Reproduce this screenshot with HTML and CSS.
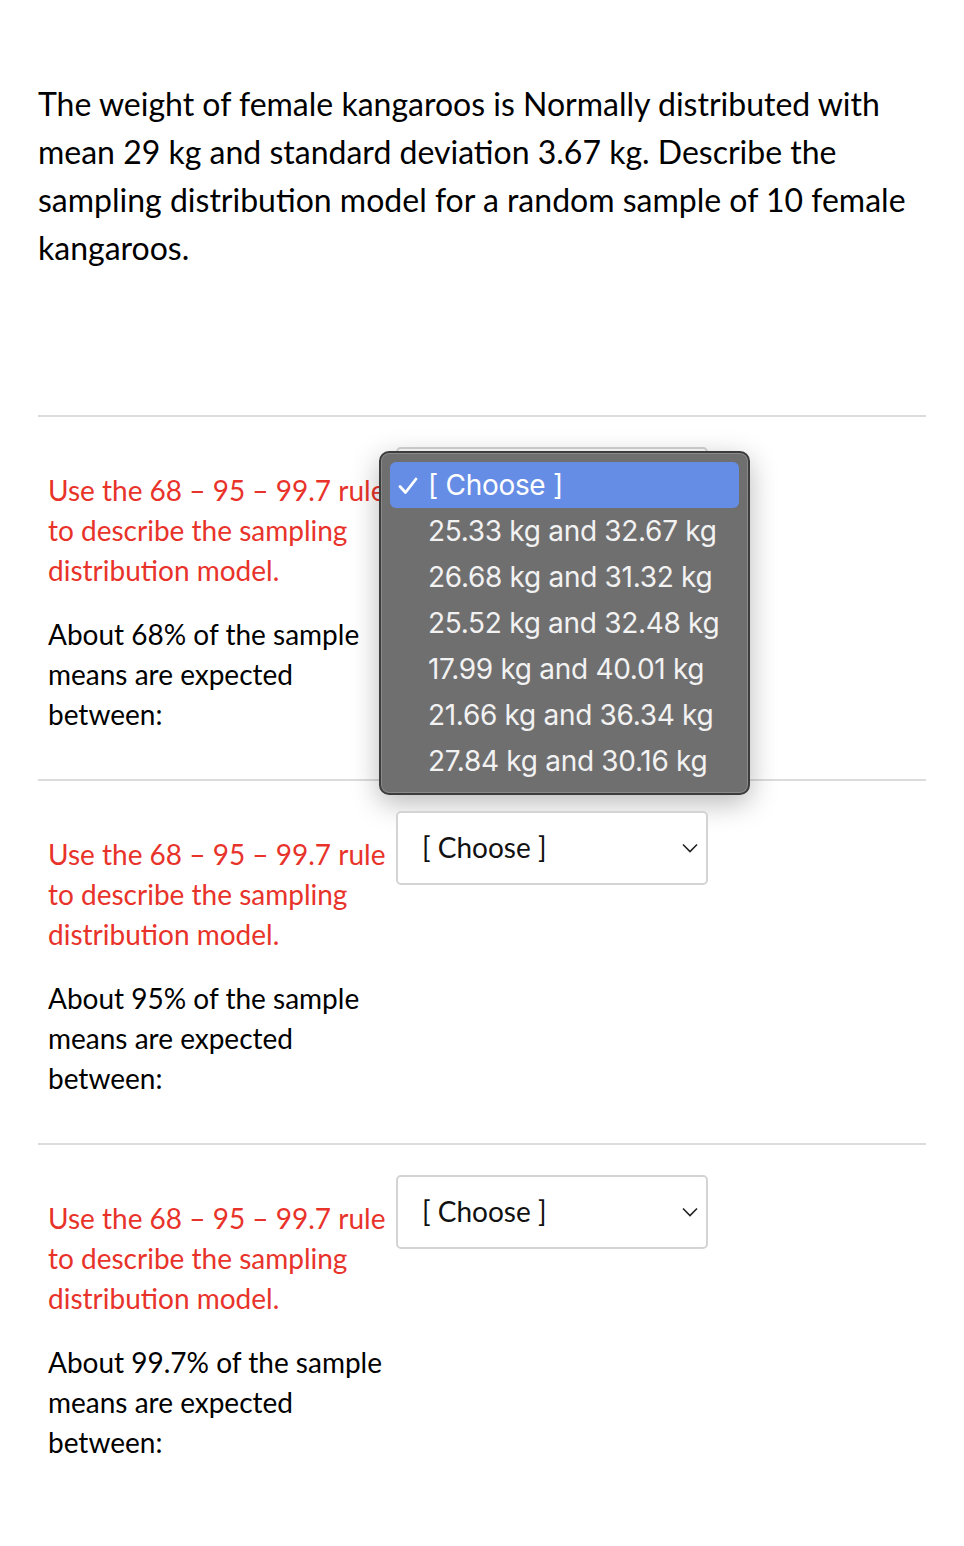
FILE: index.html
```html
<!DOCTYPE html>
<html>
<head>
<meta charset="utf-8">
<link rel="stylesheet" href="styles.css">
</head>
<body>
<div class="page">
  <p class="question">The weight of female kangaroos is Normally distributed with mean 29 kg and standard deviation 3.67 kg. Describe the sampling distribution model for a random sample of 10 female kangaroos.</p>
  <div class="rows">
    <div class="row">
      <div class="label">
        <p class="hint">Use the 68 – 95 – 99.7 rule to describe the sampling distribution model.</p>
        <p class="text">About 68% of the sample means are expected between:</p>
      </div>
      <div class="control">
        <div class="select open"><span>[ Choose ]</span><svg class="chev" width="16" height="10" viewBox="0 0 16 10"><path d="M1 1.5 L8 8.5 L15 1.5" fill="none" stroke="#222" stroke-width="1.6"/></svg></div>
        <div class="menu">
          <div class="opt active"><svg class="check" width="20" height="18" viewBox="0 0 20 18"><path d="M2 9.5 L7.5 15.5 L18 2" fill="none" stroke="#fff" stroke-width="2.8" stroke-linecap="round" stroke-linejoin="round"/></svg>[ Choose ]</div>
          <div class="opt">25.33 kg and 32.67 kg</div>
          <div class="opt">26.68 kg and 31.32 kg</div>
          <div class="opt">25.52 kg and 32.48 kg</div>
          <div class="opt">17.99 kg and 40.01 kg</div>
          <div class="opt">21.66 kg and 36.34 kg</div>
          <div class="opt">27.84 kg and 30.16 kg</div>
        </div>
      </div>
    </div>
    <div class="row">
      <div class="label">
        <p class="hint">Use the 68 – 95 – 99.7 rule to describe the sampling distribution model.</p>
        <p class="text">About 95% of the sample means are expected between:</p>
      </div>
      <div class="control">
        <div class="select"><span>[ Choose ]</span><svg class="chev" width="16" height="10" viewBox="0 0 16 10"><path d="M1 1.5 L8 8.5 L15 1.5" fill="none" stroke="#222" stroke-width="1.6"/></svg></div>
      </div>
    </div>
    <div class="row last">
      <div class="label">
        <p class="hint">Use the 68 – 95 – 99.7 rule to describe the sampling distribution model.</p>
        <p class="text">About 99.7% of the sample means are expected between:</p>
      </div>
      <div class="control">
        <div class="select"><span>[ Choose ]</span><svg class="chev" width="16" height="10" viewBox="0 0 16 10"><path d="M1 1.5 L8 8.5 L15 1.5" fill="none" stroke="#222" stroke-width="1.6"/></svg></div>
      </div>
    </div>
  </div>
</div>
</body>
</html>
```
FILE: styles.css
```css
html, body {
  margin: 0;
  padding: 0;
  background: #fff;
}
body {
  font-family: Lato, "Liberation Sans", sans-serif;
  color: #000;
}
.page {
  padding: 80px 38px 0 38px;
}
.question {
  margin: 0;
  font-size: 32px;
  line-height: 48px;
}
.rows {
  margin-top: 143px;
  border-top: 2px solid #dcdcdc;
}
.row {
  display: flex;
  align-items: flex-start;
  padding: 30px 0 28px 10px;
  border-bottom: 2px solid #dcdcdc;
  height: 304px;
}
.row.last {
  border-bottom: none;
}
.label {
  width: 348px;
  padding-top: 23px;
}
.hint {
  margin: 0;
  color: #e8332a;
  font-size: 28px;
  line-height: 40px;
}
.text {
  margin: 24px 0 0 0;
  font-size: 28px;
  line-height: 40px;
}
.control {
  position: relative;
}
.select {
  box-sizing: border-box;
  width: 312px;
  height: 74px;
  border: 2px solid #d4d4d4;
  border-radius: 5px;
  background: #fff;
  display: flex;
  align-items: center;
  justify-content: space-between;
  padding: 0 8px 2px 24px;
  font-size: 28px;
  color: #111;
}
.select.open span,
.select.open .chev {
  visibility: hidden;
}
.chev {
  margin-top: 2px;
}
.menu {
  position: absolute;
  left: -17px;
  top: 4px;
  width: 371px;
  box-sizing: border-box;
  background: #706f70;
  border: 2px solid #3c3c3c;
  border-radius: 10px;
  box-shadow: 0 0 0 1px #8a8a8a inset, 0 8px 28px rgba(0,0,0,0.28);
  padding: 9px 9px 9px 9px;
  font-family: Inter, "Noto Sans", sans-serif;
  font-size: 28px;
  color: #f2f2f2;
}
.opt {
  height: 46px;
  line-height: 46px;
  padding-left: 38px;
  position: relative;
  border-radius: 6px;
  letter-spacing: -0.3px;
  white-space: nowrap;
}
.opt.active {
  background: #668de5;
  color: #fff;
}
.check {
  position: absolute;
  left: 8px;
  top: 15px;
}
```
